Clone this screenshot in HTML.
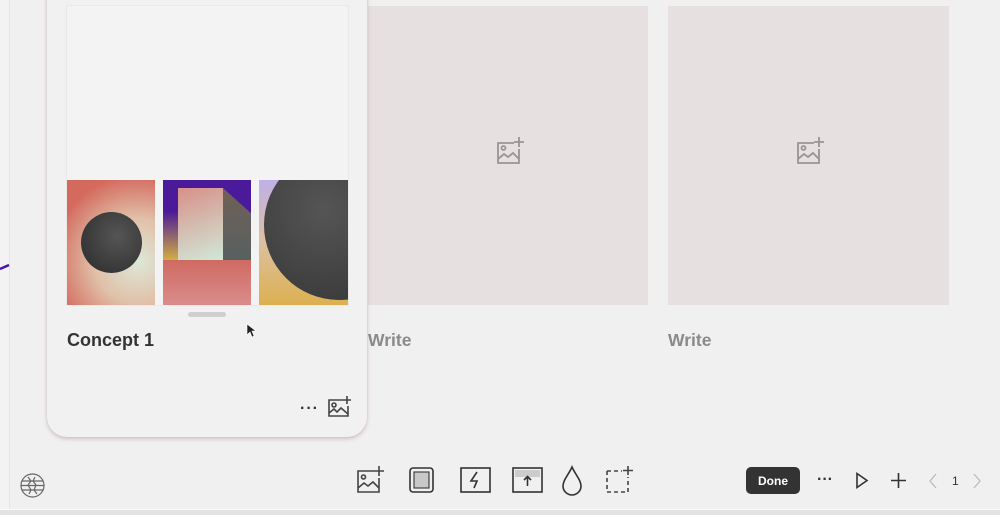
<!DOCTYPE html><html><head><style>
body{margin:0;width:1000px;height:514px;background:#f1f0f0;position:relative;overflow:hidden;font-family:"Liberation Sans",sans-serif}
.a{position:absolute}
.ph{background:#e6e0e0}
.w{font-weight:bold;font-size:17.5px;color:#8a8a8a}
svg{position:absolute;overflow:visible}
</style></head><body>
<div class="a" style="left:0;top:0;width:9px;height:514px;background:#f4f3f3"></div>
<div class="a" style="left:9px;top:0;width:1px;height:514px;background:#e6e4e4"></div>
<div class="a" style="left:0;top:509px;width:1000px;height:5px;background:#e4e2e2;border-top:1px solid #fafafa"></div>
<svg style="left:0;top:255px" width="12" height="20"><path d="M0 14 L9 10" stroke="#4a14b0" stroke-width="2.5"/></svg>
<div class="a ph" style="left:368px;top:6px;width:280px;height:299px"></div>
<div class="a ph" style="left:668px;top:6px;width:281px;height:299px"></div>
<div class="a w" style="left:368px;top:330px">Write</div>
<div class="a w" style="left:668px;top:330px">Write</div>
<svg style="left:496px;top:137px" width="28" height="28" viewBox="0 0 28 28" fill="none" stroke="#9a9494" stroke-width="1.8"><path d="M18 6H2v20h21V12"/><circle cx="7.5" cy="11" r="2"/><path d="M2 22l6-5 4 3 5-4 6 6"/><path d="M23 0v10M18 5h10"/></svg>
<svg style="left:796px;top:137px" width="28" height="28" viewBox="0 0 28 28" fill="none" stroke="#9a9494" stroke-width="1.8"><path d="M18 6H2v20h21V12"/><circle cx="7.5" cy="11" r="2"/><path d="M2 22l6-5 4 3 5-4 6 6"/><path d="M23 0v10M18 5h10"/></svg>
<div class="a" style="left:47px;top:-20px;width:320px;height:457px;background:#f2f1f1;border-radius:20px;box-shadow:0 2px 4px rgba(150,110,110,.35),0 0 2px rgba(0,0,0,.08)"></div>
<div class="a" style="left:66px;top:5px;width:281px;height:299px;background:#f3f3f3;border:1px solid #ebe8e8"></div>
<div class="a" style="left:67px;top:180px;width:88px;height:125px;background:radial-gradient(circle at 80% 65%,#dde8d8 0%,#e0c0a8 40%,#d46a5e 80%),#d47060;overflow:hidden">
<div class="a" style="left:14px;top:32px;width:61px;height:61px;border-radius:50%;background:radial-gradient(circle at 60% 40%,#555,#2a2a2a)"></div></div>
<div class="a" style="left:163px;top:180px;width:88px;height:125px;background:linear-gradient(#4a1a9a 0%,#4a1a9a 25%,#d8b040 65%,#d8b040 100%);overflow:hidden">
<div class="a" style="left:0;top:80px;width:88px;height:45px;background:linear-gradient(#cf6a62,#da8c8c)"></div>
<div class="a" style="left:15px;top:8px;width:45px;height:72px;background:linear-gradient(160deg,#d89088,#d0e8d8)"></div>
<div class="a" style="left:60px;top:8px;width:28px;height:72px;background:linear-gradient(#706058,#586060);clip-path:polygon(0 0,100% 35%,100% 100%,0 100%)"></div></div>
<div class="a" style="left:259px;top:180px;width:89px;height:125px;background:linear-gradient(#c0b0e8,#dcc0a0 50%,#dcb050);overflow:hidden">
<div class="a" style="left:5px;top:-30px;width:150px;height:150px;border-radius:50%;background:radial-gradient(circle at 40% 40%,#555,#333)"></div></div>
<div class="a" style="left:188px;top:312px;width:38px;height:5px;border-radius:3px;background:#cfcfcf"></div>
<div class="a" style="left:67px;top:330px;font-weight:bold;font-size:18px;color:#333">Concept 1</div>
<svg style="left:246px;top:323px" width="10" height="16"><path d="M1 1v11l3-3 2 5 2-1-2-5h4z" fill="#222" stroke="#fff" stroke-width=".6"/></svg>
<div class="a" style="left:300px;top:400px;font-size:16px;font-weight:bold;color:#333;letter-spacing:1px">···</div>
<svg style="left:328px;top:396px" width="24" height="22" viewBox="0 0 24 22" fill="none" stroke="#444" stroke-width="1.6"><path d="M15 4H1v16h19V10"/><circle cx="6" cy="9" r="2"/><path d="M1 17l5-4 3 3 4-4 7 6"/><path d="M19 0v8M15 4h8"/></svg>
<svg style="left:20px;top:473px" width="25" height="25" viewBox="0 0 25 25" fill="none" stroke="#666" stroke-width="1.2"><circle cx="12.5" cy="12.5" r="11.5"/><path d="M2 8h21M1 12.5h23M2 17h21M8 4l3 4-3 4 3 5-2 4M15 4l-2 4 3 4-2 5 3 4"/></svg>
<svg style="left:356px;top:466px" width="30" height="28" viewBox="0 0 30 28" fill="none" stroke="#444" stroke-width="1.6"><path d="M18 5H2v21h21V12"/><circle cx="7.5" cy="11" r="2"/><path d="M2 22l6-5 4 3 5-4 6 6" /><path d="M23 0v10M18 5h10"/></svg>
<svg style="left:409px;top:467px" width="26" height="28" viewBox="0 0 26 28"><rect x="1" y="1" width="23" height="24" rx="3" fill="none" stroke="#333" stroke-width="1.6"/><rect x="5" y="5" width="15" height="16" fill="#c8c8c8" stroke="#444" stroke-width="1.2"/></svg>
<svg style="left:460px;top:467px" width="31" height="27" viewBox="0 0 31 27" fill="none" stroke="#333" stroke-width="1.6"><rect x="1" y="1" width="29" height="24"/><path d="M17 5l-6 9h6l-3 7"/></svg>
<svg style="left:512px;top:467px" width="31" height="27" viewBox="0 0 31 27"><rect x="1" y="1" width="29" height="24" fill="none" stroke="#333" stroke-width="1.6"/><rect x="3" y="3" width="25" height="7" fill="#ccc"/><path d="M15.5 19V10M12 13l3.5-3.5 3.5 3.5" fill="none" stroke="#333" stroke-width="1.6"/></svg>
<svg style="left:561px;top:466px" width="22" height="30" viewBox="0 0 22 30" fill="none" stroke="#333" stroke-width="1.6"><path d="M11 1C8 8 2 14 2 20a9 9 0 0 0 18 0C20 14 14 8 11 1z"/></svg>
<svg style="left:604px;top:465px" width="30" height="30" viewBox="0 0 30 30" fill="none" stroke="#444" stroke-width="1.6"><path d="M3 6v21h21V12" stroke-dasharray="4 3"/><path d="M3 6h15" stroke-dasharray="4 3"/><path d="M24 1v9M19 5.5h10"/></svg>
<div class="a" style="left:746px;top:467px;width:54px;height:27px;border-radius:5px;background:#333;color:#fff;font-size:12px;font-weight:bold;text-align:center;line-height:28px">Done</div>
<div class="a" style="left:817px;top:471px;font-size:16px;font-weight:bold;color:#333">···</div>
<svg style="left:855px;top:472px" width="14" height="17"><path d="M2 1.5l10 7-10 7z" fill="none" stroke="#333" stroke-width="1.6"/></svg>
<svg style="left:890px;top:472px" width="17" height="17"><path d="M8.5 1v15M1 8.5h15" stroke="#333" stroke-width="1.6"/></svg>
<svg style="left:928px;top:473px" width="10" height="16"><path d="M8 1L2 8l6 7" fill="none" stroke="#bbb" stroke-width="1.3"/></svg>
<div class="a" style="left:952px;top:474px;font-size:12px;color:#333">1</div>
<svg style="left:972px;top:473px" width="10" height="16"><path d="M2 1l6 7-6 7" fill="none" stroke="#bbb" stroke-width="1.3"/></svg>
</body></html>
